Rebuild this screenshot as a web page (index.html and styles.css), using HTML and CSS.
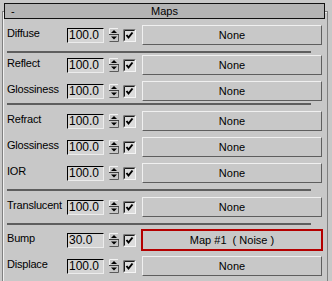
FILE: index.html
```html
<!DOCTYPE html>
<html lang="en">
<head>
    <meta charset="UTF-8">
    <title>Maps</title>
    <link rel="stylesheet" href="styles.css">
</head>
<body>

<div class="rollout">
    <div class="rollout-title">
        <span class="rollout-toggle">-</span>
        <span class="rollout-name">Maps</span>
        <span></span>
    </div>

    <div class="rollout-body">
        <div class="param-row">
            <span class="param-label">Diffuse</span>
            <span class="num-field">100.0</span>
            <svg class="spinner" width="10" height="14" viewBox="0 0 10 14">
                <path d="M0.5 6V0.5H9" stroke="#f2f2f2" fill="none"/>
                <path d="M0.5 13.5H9.5V7" stroke="#5a5a5a" fill="none"/>
                <path d="M0 6.5H10" stroke="#404040"/>
                <path d="M2 5L5 2L8 5Z" fill="#000"/>
                <path d="M2 8.5L5 11.5L8 8.5Z" fill="#000"/>
            </svg>
            <svg class="check" width="13" height="13" viewBox="0 0 13 13">
                <rect x="0.5" y="0.5" width="12" height="12" fill="#dcdcdc" stroke="#f4f4f4"/>
                <path d="M0.5 12.5V0.5H12.5" stroke="#7a7a7a" fill="none"/>
                <path d="M1.5 11.5V1.5H11.5" stroke="#1a1a1a" fill="none"/>
                <path d="M3.5 6L5.5 8.5L9.5 3.5" stroke="#000" stroke-width="2" fill="none"/>
            </svg>
            <button class="map-btn">None</button>
        </div>

        <div class="divider"></div>

        <div class="param-row">
            <span class="param-label">Reflect</span>
            <span class="num-field">100.0</span>
            <svg class="spinner" width="10" height="14" viewBox="0 0 10 14">
                <path d="M0.5 6V0.5H9" stroke="#f2f2f2" fill="none"/>
                <path d="M0.5 13.5H9.5V7" stroke="#5a5a5a" fill="none"/>
                <path d="M0 6.5H10" stroke="#404040"/>
                <path d="M2 5L5 2L8 5Z" fill="#000"/>
                <path d="M2 8.5L5 11.5L8 8.5Z" fill="#000"/>
            </svg>
            <svg class="check" width="13" height="13" viewBox="0 0 13 13">
                <rect x="0.5" y="0.5" width="12" height="12" fill="#dcdcdc" stroke="#f4f4f4"/>
                <path d="M0.5 12.5V0.5H12.5" stroke="#7a7a7a" fill="none"/>
                <path d="M1.5 11.5V1.5H11.5" stroke="#1a1a1a" fill="none"/>
                <path d="M3.5 6L5.5 8.5L9.5 3.5" stroke="#000" stroke-width="2" fill="none"/>
            </svg>
            <button class="map-btn">None</button>
        </div>
        <div class="param-row">
            <span class="param-label">Glossiness</span>
            <span class="num-field">100.0</span>
            <svg class="spinner" width="10" height="14" viewBox="0 0 10 14">
                <path d="M0.5 6V0.5H9" stroke="#f2f2f2" fill="none"/>
                <path d="M0.5 13.5H9.5V7" stroke="#5a5a5a" fill="none"/>
                <path d="M0 6.5H10" stroke="#404040"/>
                <path d="M2 5L5 2L8 5Z" fill="#000"/>
                <path d="M2 8.5L5 11.5L8 8.5Z" fill="#000"/>
            </svg>
            <svg class="check" width="13" height="13" viewBox="0 0 13 13">
                <rect x="0.5" y="0.5" width="12" height="12" fill="#dcdcdc" stroke="#f4f4f4"/>
                <path d="M0.5 12.5V0.5H12.5" stroke="#7a7a7a" fill="none"/>
                <path d="M1.5 11.5V1.5H11.5" stroke="#1a1a1a" fill="none"/>
                <path d="M3.5 6L5.5 8.5L9.5 3.5" stroke="#000" stroke-width="2" fill="none"/>
            </svg>
            <button class="map-btn">None</button>
        </div>

        <div class="divider divider-up"></div>

        <div class="param-row">
            <span class="param-label">Refract</span>
            <span class="num-field">100.0</span>
            <svg class="spinner" width="10" height="14" viewBox="0 0 10 14">
                <path d="M0.5 6V0.5H9" stroke="#f2f2f2" fill="none"/>
                <path d="M0.5 13.5H9.5V7" stroke="#5a5a5a" fill="none"/>
                <path d="M0 6.5H10" stroke="#404040"/>
                <path d="M2 5L5 2L8 5Z" fill="#000"/>
                <path d="M2 8.5L5 11.5L8 8.5Z" fill="#000"/>
            </svg>
            <svg class="check" width="13" height="13" viewBox="0 0 13 13">
                <rect x="0.5" y="0.5" width="12" height="12" fill="#dcdcdc" stroke="#f4f4f4"/>
                <path d="M0.5 12.5V0.5H12.5" stroke="#7a7a7a" fill="none"/>
                <path d="M1.5 11.5V1.5H11.5" stroke="#1a1a1a" fill="none"/>
                <path d="M3.5 6L5.5 8.5L9.5 3.5" stroke="#000" stroke-width="2" fill="none"/>
            </svg>
            <button class="map-btn">None</button>
        </div>
        <div class="param-row">
            <span class="param-label">Glossiness</span>
            <span class="num-field">100.0</span>
            <svg class="spinner" width="10" height="14" viewBox="0 0 10 14">
                <path d="M0.5 6V0.5H9" stroke="#f2f2f2" fill="none"/>
                <path d="M0.5 13.5H9.5V7" stroke="#5a5a5a" fill="none"/>
                <path d="M0 6.5H10" stroke="#404040"/>
                <path d="M2 5L5 2L8 5Z" fill="#000"/>
                <path d="M2 8.5L5 11.5L8 8.5Z" fill="#000"/>
            </svg>
            <svg class="check" width="13" height="13" viewBox="0 0 13 13">
                <rect x="0.5" y="0.5" width="12" height="12" fill="#dcdcdc" stroke="#f4f4f4"/>
                <path d="M0.5 12.5V0.5H12.5" stroke="#7a7a7a" fill="none"/>
                <path d="M1.5 11.5V1.5H11.5" stroke="#1a1a1a" fill="none"/>
                <path d="M3.5 6L5.5 8.5L9.5 3.5" stroke="#000" stroke-width="2" fill="none"/>
            </svg>
            <button class="map-btn">None</button>
        </div>
        <div class="param-row">
            <span class="param-label">IOR</span>
            <span class="num-field">100.0</span>
            <svg class="spinner" width="10" height="14" viewBox="0 0 10 14">
                <path d="M0.5 6V0.5H9" stroke="#f2f2f2" fill="none"/>
                <path d="M0.5 13.5H9.5V7" stroke="#5a5a5a" fill="none"/>
                <path d="M0 6.5H10" stroke="#404040"/>
                <path d="M2 5L5 2L8 5Z" fill="#000"/>
                <path d="M2 8.5L5 11.5L8 8.5Z" fill="#000"/>
            </svg>
            <svg class="check" width="13" height="13" viewBox="0 0 13 13">
                <rect x="0.5" y="0.5" width="12" height="12" fill="#dcdcdc" stroke="#f4f4f4"/>
                <path d="M0.5 12.5V0.5H12.5" stroke="#7a7a7a" fill="none"/>
                <path d="M1.5 11.5V1.5H11.5" stroke="#1a1a1a" fill="none"/>
                <path d="M3.5 6L5.5 8.5L9.5 3.5" stroke="#000" stroke-width="2" fill="none"/>
            </svg>
            <button class="map-btn">None</button>
        </div>

        <div class="divider divider-wide"></div>

        <div class="param-row">
            <span class="param-label">Translucent</span>
            <span class="num-field">100.0</span>
            <svg class="spinner" width="10" height="14" viewBox="0 0 10 14">
                <path d="M0.5 6V0.5H9" stroke="#f2f2f2" fill="none"/>
                <path d="M0.5 13.5H9.5V7" stroke="#5a5a5a" fill="none"/>
                <path d="M0 6.5H10" stroke="#404040"/>
                <path d="M2 5L5 2L8 5Z" fill="#000"/>
                <path d="M2 8.5L5 11.5L8 8.5Z" fill="#000"/>
            </svg>
            <svg class="check" width="13" height="13" viewBox="0 0 13 13">
                <rect x="0.5" y="0.5" width="12" height="12" fill="#dcdcdc" stroke="#f4f4f4"/>
                <path d="M0.5 12.5V0.5H12.5" stroke="#7a7a7a" fill="none"/>
                <path d="M1.5 11.5V1.5H11.5" stroke="#1a1a1a" fill="none"/>
                <path d="M3.5 6L5.5 8.5L9.5 3.5" stroke="#000" stroke-width="2" fill="none"/>
            </svg>
            <button class="map-btn">None</button>
        </div>

        <div class="divider divider-low"></div>

        <div class="param-row">
            <span class="param-label">Bump</span>
            <span class="num-field">30.0</span>
            <svg class="spinner" width="10" height="14" viewBox="0 0 10 14">
                <path d="M0.5 6V0.5H9" stroke="#f2f2f2" fill="none"/>
                <path d="M0.5 13.5H9.5V7" stroke="#5a5a5a" fill="none"/>
                <path d="M0 6.5H10" stroke="#404040"/>
                <path d="M2 5L5 2L8 5Z" fill="#000"/>
                <path d="M2 8.5L5 11.5L8 8.5Z" fill="#000"/>
            </svg>
            <svg class="check" width="13" height="13" viewBox="0 0 13 13">
                <rect x="0.5" y="0.5" width="12" height="12" fill="#dcdcdc" stroke="#f4f4f4"/>
                <path d="M0.5 12.5V0.5H12.5" stroke="#7a7a7a" fill="none"/>
                <path d="M1.5 11.5V1.5H11.5" stroke="#1a1a1a" fill="none"/>
                <path d="M3.5 6L5.5 8.5L9.5 3.5" stroke="#000" stroke-width="2" fill="none"/>
            </svg>
            <button class="map-btn map-btn-active">Map #1  ( Noise )</button>
        </div>
        <div class="param-row">
            <span class="param-label">Displace</span>
            <span class="num-field">100.0</span>
            <svg class="spinner" width="10" height="14" viewBox="0 0 10 14">
                <path d="M0.5 6V0.5H9" stroke="#f2f2f2" fill="none"/>
                <path d="M0.5 13.5H9.5V7" stroke="#5a5a5a" fill="none"/>
                <path d="M0 6.5H10" stroke="#404040"/>
                <path d="M2 5L5 2L8 5Z" fill="#000"/>
                <path d="M2 8.5L5 11.5L8 8.5Z" fill="#000"/>
            </svg>
            <svg class="check" width="13" height="13" viewBox="0 0 13 13">
                <rect x="0.5" y="0.5" width="12" height="12" fill="#dcdcdc" stroke="#f4f4f4"/>
                <path d="M0.5 12.5V0.5H12.5" stroke="#7a7a7a" fill="none"/>
                <path d="M1.5 11.5V1.5H11.5" stroke="#1a1a1a" fill="none"/>
                <path d="M3.5 6L5.5 8.5L9.5 3.5" stroke="#000" stroke-width="2" fill="none"/>
            </svg>
            <button class="map-btn">None</button>
        </div>
    </div>
</div>

</body>
</html>
```

FILE: styles.css
```css
html, body {
    margin: 0;
    height: 100%;
    overflow: hidden;
}
body {
    background-color: #c8c8c8;
    font-family: "Liberation Sans", Arial, sans-serif;
    font-size: 11px;
    color: #000;
}
.rollout {
    margin: 11px 4px 0 2px;
    height: 280px;
    border-top: 1px solid #808080;
    border-left: 1px solid #808080;
    border-right: 1px solid #808080;
    box-shadow: inset 1px 1px 0 #f0f0f0;
}
.rollout-title {
    margin: -9px 2px 0 1px;
    height: 16px;
    box-sizing: border-box;
    border: 1px solid #111;
    background-color: #b4b4b4;
    display: grid;
    grid-template-columns: 1fr auto 1fr;
    align-items: center;
    line-height: 13px;
}
.rollout-toggle {
    padding-left: 6px;
}
.rollout-body {
    padding-top: 6px;
}
.param-row {
    display: flex;
    align-items: center;
    height: 20px;
    margin-bottom: 6px;
    padding-left: 4px;
}
.param-label {
    width: 60px;
    padding-bottom: 4px;
    white-space: nowrap;
    letter-spacing: -0.2px;
}
.num-field {
    width: 37px;
    height: 15px;
    box-sizing: border-box;
    border-top: 1px solid #000;
    border-left: 1px solid #000;
    border-right: 1px solid #ececec;
    border-bottom: 1px solid #ececec;
    background-color: #d4d4d4;
    font-size: 12px;
    line-height: 12px;
    padding-left: 1px;
}
.spinner {
    display: block;
    margin-left: 5px;
    background-color: #c8c8c8;
}
.check {
    display: block;
    margin-left: 4px;
}
.map-btn {
    margin-left: 6px;
    width: 180px;
    height: 20px;
    padding: 0;
    box-sizing: border-box;
    background-color: #c8c8c8;
    border: 1px solid;
    border-color: #f0f0f0 #5e5e5e #5e5e5e #f0f0f0;
    font-family: "Liberation Sans", Arial, sans-serif;
    font-size: 11px;
    color: #000;
    white-space: pre;
}
.map-btn-active {
    margin-left: 5px;
    width: 182px;
    height: 22px;
    border: 2px solid #b40000;
}
.divider {
    height: 2px;
    margin: 1px 16px 2px 4px;
    background-color: #5e5e5e;
}
.divider-up {
    margin-top: -4px;
    margin-bottom: 6px;
}
.divider-wide {
    margin-top: 0;
    margin-bottom: 6px;
}
.divider-low {
    margin-bottom: 5px;
}
```
